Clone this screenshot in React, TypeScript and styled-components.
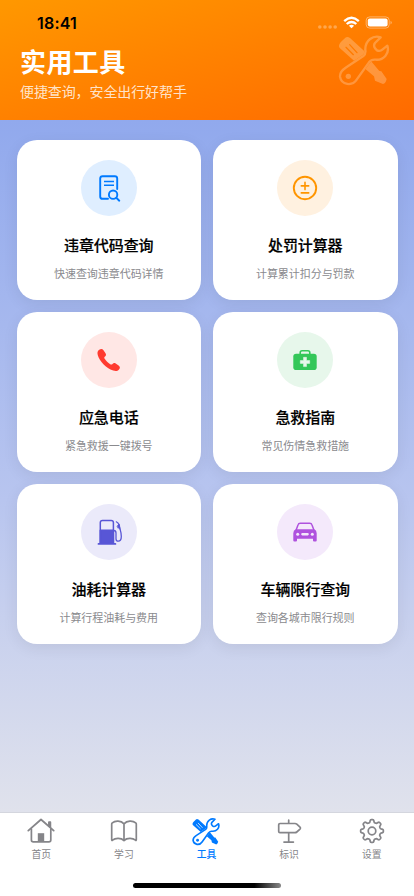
import React from "react";
import styled, { createGlobalStyle } from "styled-components";

const GlobalStyle = createGlobalStyle`
  * { box-sizing: border-box; }
  body {
    margin: 0;
    font-family: Inter, "Noto Sans CJK SC", sans-serif;
    overflow: hidden;
  }
`;

const Screen = styled.div`
  width: 414px;
  height: 896px;
  display: flex;
  flex-direction: column;
  background: #fff;
`;

const Header = styled.header`
  height: 120px;
  flex: none;
  background: linear-gradient(to bottom right, #ff9800 0%, #ff6a00 100%);
`;

const StatusBar = styled.div`
  height: 44px;
  padding: 13px 21px 0 37px;
  display: flex;
  justify-content: space-between;
`;

const Clock = styled.span`
  font-size: 16px;
  line-height: 20px;
  font-weight: 600;
  letter-spacing: 0.2px;
  color: #000;
`;

const StatusIcons = styled.svg`
  width: 76px;
  height: 16px;
  margin-top: 2px;
`;

const HeaderRow = styled.div`
  display: flex;
  justify-content: space-between;
  padding: 0 24px 0 20px;
`;

const Heading = styled.h1`
  margin: 1px 0 0;
  font-size: 26px;
  line-height: 36px;
  font-weight: 700;
  letter-spacing: 0.4px;
  color: #fff;
`;

const Tagline = styled.p`
  margin: 1px 0 0;
  font-size: 14px;
  line-height: 20px;
  letter-spacing: -0.1px;
  color: rgba(255, 255, 255, 0.8);
`;

const HeaderMark = styled.div`
  width: 52px;
  height: 52px;
  margin-top: -9px;
  color: #fff;
  opacity: 0.24;
`;

const Content = styled.main`
  height: 692px;
  flex: none;
  padding: 20px 16.5px;
  background: linear-gradient(180deg, #91a9ed 0%, #b8c5ef 55%, #e0e2ec 100%);
`;

const Grid = styled.div`
  display: grid;
  grid-template-columns: 1fr 1fr;
  grid-auto-rows: 160px;
  gap: 12px;
`;

const Card = styled.section`
  display: flex;
  flex-direction: column;
  align-items: center;
  padding-top: 20px;
  border-radius: 20px;
  background: #fff;
  box-shadow: 0 4px 16px rgba(0, 0, 0, 0.07);
`;

const IconDisc = styled.div<{ $color: string; $tint: string }>`
  width: 56px;
  height: 56px;
  border-radius: 50%;
  color: ${(p) => p.$color};
  background: ${(p) => p.$tint};

  svg { display: block; width: 56px; height: 56px; }
`;

const CardTitle = styled.h2`
  margin: 19px 0 0;
  font-size: 15px;
  line-height: 22px;
  font-weight: 500;
  letter-spacing: -0.1px;
  color: #000;
  -webkit-text-stroke: 0.2px #000;
`;

const CardNote = styled.p`
  margin: 9px 0 0;
  font-size: 11px;
  line-height: 16px;
  letter-spacing: -0.05px;
  color: #8a8a8e;
`;

const TabBar = styled.nav`
  height: 70px;
  flex: none;
  display: grid;
  grid-template-columns: repeat(5, 1fr);
  padding-right: 1px;
  border-top: 1px solid #d4d6de;
`;

const Tab = styled.a<{ $active?: boolean }>`
  display: flex;
  flex-direction: column;
  align-items: center;
  padding-top: 4px;
  font-size: 9.8px;
  line-height: 16px;
  font-weight: ${(p) => (p.$active ? 500 : 400)};
  color: ${(p) => (p.$active ? "#007aff" : "#858589")};

  svg { display: block; width: 30px; height: 30px; }
`;

const TabToolsMark = styled.div`
  width: 30px;
  height: 30px;
  padding: 1px;

  svg { width: 28px; height: 28px; }
`;

const HomeIndicator = styled.div`
  width: 148px;
  height: 5px;
  margin: 1px auto 0;
  border-radius: 3px;
  background: linear-gradient(90deg, #000 0%, #000 82%, #888 100%);
`;

const wrenchPath =
  "M242 112L225 129Q219 137 226 146L231 151Q240 155 248 148L262 137C270 161 250 181 227 179Q215 177 207 187L170 239C157 259 124 256 120 230C119 216 128 209 139 202L190 168Q198 162 196 150C195 121 220 104 242 112Z";

function ToolsGlyph({ id, bold }: { id: string; bold?: boolean }) {
  return (
    <svg viewBox="114 105 156 156" fill="none" stroke="none">
      <mask id={id} maskUnits="userSpaceOnUse" x="100" y="90" width="190" height="190">
        <rect x="100" y="90" width="190" height="190" fill="#fff" />
        <g stroke="#000" strokeWidth="4" strokeLinecap="round">
          <path d="M138 142l22 22M149 134l22 24" />
        </g>
        <path d={wrenchPath} fill="#000" stroke="#000" strokeWidth="7" />
      </mask>
      <path
        mask={`url(#${id})`}
        fill="currentColor"
        d="M120 145Q113 138 122 127L136 113Q142 108 150 114L200 160L207 176L238 213L244 214L260 237Q257 250 249 252L225 242L222 229L188 200L172 191Z"
      />
      <path stroke="currentColor" strokeWidth={bold ? 9 : 7} strokeLinejoin="round" d={wrenchPath} />
      <circle cx="145" cy="229" r="8" fill="currentColor" />
    </svg>
  );
}

const lineProps = {
  fill: "none",
  stroke: "currentColor",
  strokeLinecap: "round" as const,
  strokeLinejoin: "round" as const,
};

const documentSearch = (
  <svg viewBox="0 0 56 56" {...lineProps} strokeWidth="1.9">
    <path d="M36.2 29V18.6Q36.2 16.2 33.8 16.2H21.6Q19.2 16.2 19.2 18.6V36.4Q19.2 38.8 21.6 38.8H27" />
    <path d="M23 21.4H33M23 25.2H33" strokeWidth="1.5" strokeLinecap="butt" />
    <circle cx="32.1" cy="34.7" r="4.2" />
    <path d="M35.3 37.8L38.3 40.7" />
  </svg>
);

const plusMinus = (
  <svg viewBox="0 0 56 56" {...lineProps} strokeWidth="1.9">
    <circle cx="28" cy="28" r="11.2" />
    <path d="M24.3 25.9H31.7M28 22.2V29.6M24.3 32.9H31.7" strokeWidth="1.6" />
  </svg>
);

const phone = (
  <svg viewBox="0 0 56 56" fill="currentColor">
    <path d="M18.2 17.8C20 16.6 21.4 16.8 22.5 18.3L24.5 21.2C25.4 22.6 25 23.7 24 24.5C23.1 25.2 23.1 25.9 23.7 26.8C25 28.9 27 30.9 29.2 32.2C30.1 32.8 30.8 32.8 31.5 31.9C32.4 30.9 33.5 30.7 34.7 31.5L37.6 33.5C39.2 34.6 39.3 36 38 37.5C36.5 39.2 34.8 39.4 32.2 38.6C25 36 18.5 29.4 16.8 23.3C16.1 20.7 16.4 19 18.2 17.8Z" />
  </svg>
);

const firstAid = (
  <svg viewBox="0 0 56 56">
    <path d="M23.2 23V20.7Q23.2 18.8 25.1 18.8H30.9Q32.8 18.8 32.8 20.7V23" fill="none" stroke="currentColor" strokeWidth="1.6" />
    <rect x="16.3" y="21.7" width="23.4" height="16.3" rx="2.8" fill="currentColor" />
    <path d="M26.5 25.3H29.5V28.5H32.7V31.4H29.5V34.6H26.5V31.4H23.3V28.5H26.5Z" fill="#e7f7eb" stroke="#e7f7eb" strokeWidth="0.5" strokeLinejoin="round" />
  </svg>
);

const fuelPump = (
  <svg viewBox="0 0 56 56" {...lineProps} strokeWidth="1.5">
    <path d="M19.3 39V18.6Q19.3 16.4 21.5 16.4H30.2Q32.4 16.4 32.4 18.6V39" />
    <path d="M19.3 26.3H32.4V39H19.3Z" fill="currentColor" />
    <path d="M17.5 39.9H34.4" strokeWidth="1.8" />
    <path d="M32.8 26.5Q35 26.5 35 29V34.7Q35 37.2 37.2 37.2Q40.3 37.2 40.3 32.5C40.3 28 39 25 38.2 21.8" strokeWidth="1.3" />
    <path d="M35.3 17.8Q37.6 19 38 21.2L37 23.8" strokeWidth="1.2" />
    <path d="M36.2 22L38.4 20.2L38.9 25Z" fill="currentColor" strokeWidth="0.8" />
  </svg>
);

const car = (
  <svg viewBox="0 0 56 56">
    <path d="M19.1 26L21 20.9Q21.5 19.3 23.3 19.3H32.7Q34.5 19.3 35 20.9L36.9 26" fill="none" stroke="currentColor" strokeWidth="1.5" />
    <path d="M18.7 25.2H37.3Q39.7 26.3 39.7 29.3V36.5Q39.7 37.5 38.7 37.5H37Q36 37.5 36 36.5V34.8H20V36.5Q20 37.5 19 37.5H17.3Q16.3 37.5 16.3 36.5V29.3Q16.3 26.3 18.7 25.2Z" fill="currentColor" />
    <g fill="#f4e9fb">
      <circle cx="20.7" cy="30.2" r="1.5" />
      <circle cx="35.3" cy="30.2" r="1.5" />
      <rect x="24.2" y="29.1" width="7.6" height="2.3" rx="1.1" />
    </g>
  </svg>
);

const house = (
  <svg viewBox="0 0 30 30" {...lineProps} strokeWidth="1.7">
    <path d="M2.3 13.6L15 2.5L27.7 13.6" strokeWidth="1.8" />
    <path d="M5.4 12V23Q5.4 24.9 7.3 24.9H22.9Q24.8 24.9 24.8 23V12" />
    <path d="M22.9 8.7V5.2H24.4V10.2" />
    <path d="M11.8 16.2H18.2V25H11.8Z" fill="currentColor" stroke="none" />
  </svg>
);

const book = (
  <svg viewBox="0 0 30 30" {...lineProps} strokeWidth="1.7">
    <path d="M15 23.5C12 20.8 6.4 20.8 3.5 23.2Q2.7 23.8 2.7 22.8V7.1Q2.7 6.4 3.3 5.9C6.3 3.4 12 3.6 15 6.8C18 3.6 23.7 3.4 26.7 5.9Q27.3 6.4 27.3 7.1V22.8Q27.3 23.8 26.5 23.2C23.6 20.8 18 20.8 15 23.5ZM15 6.8V23.5" />
  </svg>
);

const signpost = (
  <svg viewBox="0 0 30 30" {...lineProps} strokeWidth="1.7">
    <path d="M14.7 3.2V6.1M14.7 16V25M10 25.1H19.4" />
    <path d="M6 6.5H21Q22 6.5 22.8 7.2L26 10.2Q27 11.2 26 12.2L22.8 15Q22 15.7 21 15.7H6Q4.7 15.7 4.7 14.4V7.8Q4.7 6.5 6 6.5Z" />
  </svg>
);

const gearOutline = Array.from({ length: 160 }, (_, i) => {
  const angle = (i / 160) * Math.PI * 2;
  const radius = 10 + 1.4 * Math.tanh(2.2 * Math.cos(angle * 8));
  return `${(radius * Math.sin(angle)).toFixed(2)},${(-radius * Math.cos(angle)).toFixed(2)}`;
}).join(" ");

const gear = (
  <svg viewBox="0 0 30 30" {...lineProps} strokeWidth="1.7">
    <g transform="translate(15 14)">
      <polygon points={gearOutline} />
      <circle r="3.8" />
    </g>
  </svg>
);

const tools = [
  { title: "违章代码查询", note: "快速查询违章代码详情", color: "#007aff", tint: "#dfeeff", icon: documentSearch },
  { title: "处罚计算器", note: "计算累计扣分与罚款", color: "#ff9500", tint: "#fff1e0", icon: plusMinus },
  { title: "应急电话", note: "紧急救援一键拨号", color: "#ff3b30", tint: "#ffe7e5", icon: phone },
  { title: "急救指南", note: "常见伤情急救措施", color: "#34c759", tint: "#e7f7eb", icon: firstAid },
  { title: "油耗计算器", note: "计算行程油耗与费用", color: "#5856d6", tint: "#ebeafa", icon: fuelPump },
  { title: "车辆限行查询", note: "查询各城市限行规则", color: "#af52de", tint: "#f4e9fb", icon: car },
];

const tabs = [
  { label: "首页", icon: house },
  { label: "学习", icon: book },
  { label: "工具", active: true, icon: <TabToolsMark><ToolsGlyph id="tab-tools" bold /></TabToolsMark> },
  { label: "标识", icon: signpost },
  { label: "设置", icon: gear },
];

export default function App() {
  return (
    <Screen lang="zh-CN">
      <GlobalStyle />
      <Header>
        <StatusBar>
          <Clock>18:41</Clock>
          <StatusIcons viewBox="0 0 76 16">
            <g fill="#fff" opacity="0.3">
              {[2.8, 8, 13.1, 18.2].map((x) => <circle key={x} cx={x} cy="12" r="1.8" />)}
            </g>
            <g fill="none" stroke="#fff" strokeWidth="2.3">
              <path d="M27.2 6.1Q34.5 -0.5 41.8 6.1" />
              <path d="M29.7 9Q34.5 4.9 39.3 9" />
            </g>
            <path d="M34.5 13.2L31.9 10.7Q34.5 8.6 37.1 10.7Z" fill="#fff" />
            <rect x="49.2" y="1.9" width="23" height="11.2" rx="3.5" fill="none" stroke="#fff" opacity="0.4" />
            <rect x="50.8" y="3.4" width="19.8" height="8.2" rx="2" fill="#fff" />
            <path d="M73.6 5.7Q75.8 7.5 73.6 9.4Z" fill="#fff" opacity="0.5" />
          </StatusIcons>
        </StatusBar>
        <HeaderRow>
          <div>
            <Heading>实用工具</Heading>
            <Tagline>便捷查询，安全出行好帮手</Tagline>
          </div>
          <HeaderMark><ToolsGlyph id="header-tools" /></HeaderMark>
        </HeaderRow>
      </Header>
      <Content>
        <Grid>
          {tools.map((t) => (
            <Card key={t.title}>
              <IconDisc $color={t.color} $tint={t.tint}>{t.icon}</IconDisc>
              <CardTitle>{t.title}</CardTitle>
              <CardNote>{t.note}</CardNote>
            </Card>
          ))}
        </Grid>
      </Content>
      <TabBar>
        {tabs.map((t) => (
          <Tab key={t.label} $active={t.active}>
            {t.icon}
            {t.label}
          </Tab>
        ))}
      </TabBar>
      <HomeIndicator />
    </Screen>
  );
}
